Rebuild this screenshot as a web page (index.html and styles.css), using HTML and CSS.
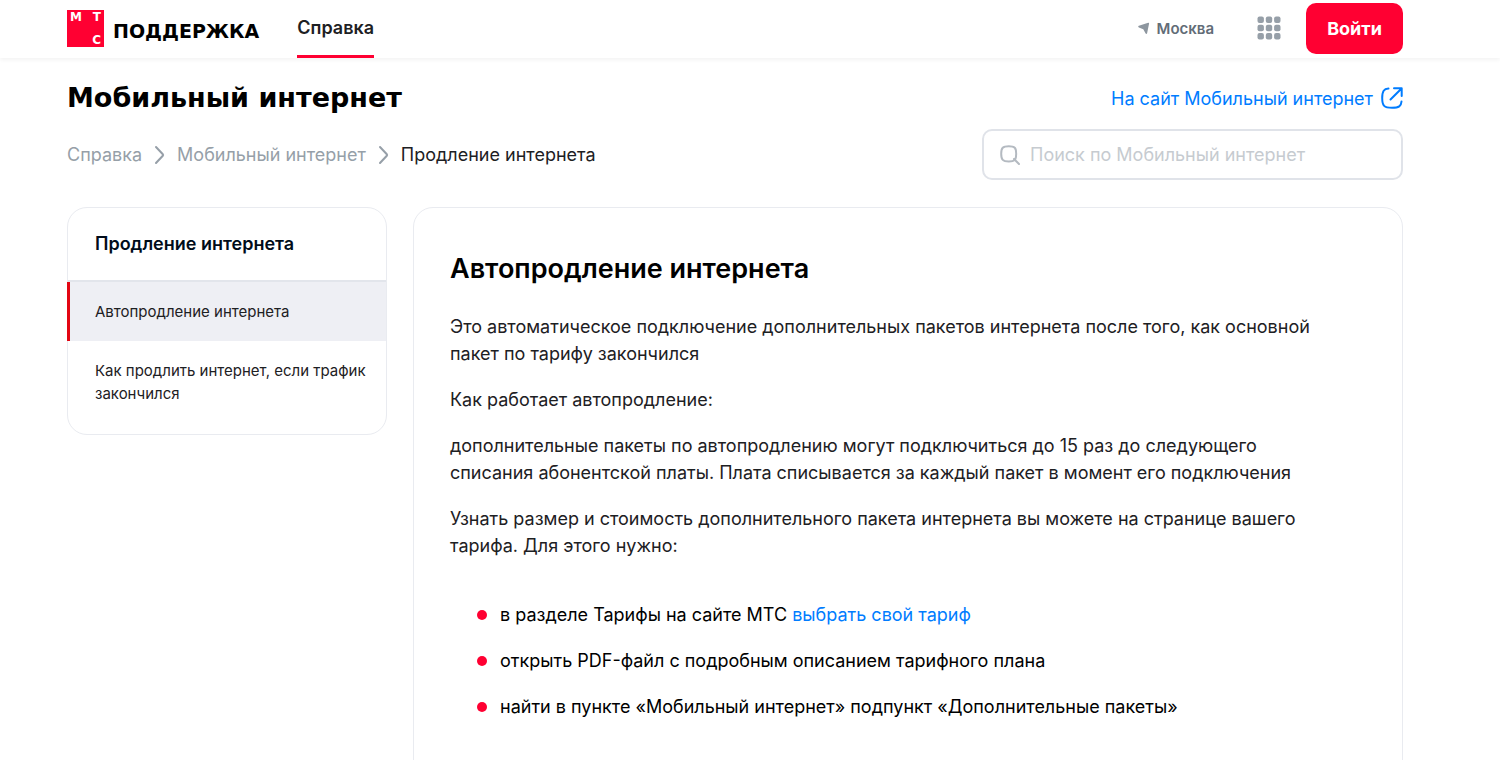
FILE: index.html
```html
<!DOCTYPE html>
<html lang="ru">
<head>
<meta charset="utf-8">
<title>Автопродление интернета — МТС Поддержка</title>
<link rel="stylesheet" href="styles.css">
</head>
<body>
<header class="header">
  <a class="brand" href="#">
    <span class="logo"><span>М</span><span>Т</span><span class="logo-last">С</span></span>
    <span class="brand-name">ПОДДЕРЖКА</span>
  </a>
  <nav class="tabs"><a class="tab" href="#">Справка</a></nav>
  <button class="region" type="button">
    <svg width="12" height="12" viewBox="0 0 12 12" aria-hidden="true"><path d="M10.200.7.900 3.700c-.9.300-.9 1.400 0 1.700l4.400 1.900 2.300 4.200c.4.700 1.300.6 1.500-.3L11.100 1.600c.1-.6-.3-1.100-.9-.9z" fill="#8d969f"/></svg>
    Москва
  </button>
  <button class="apps" type="button" aria-label="Сервисы">
    <svg width="24" height="24" viewBox="0 0 24 24" fill="#969fa8" aria-hidden="true">
      <rect x="0.500" y="0.500" width="6.400" height="6.400" rx="2"/><rect x="8.800" y="0.500" width="6.400" height="6.400" rx="2"/><rect x="17.100" y="0.500" width="6.400" height="6.400" rx="2"/>
      <rect x="0.500" y="8.800" width="6.400" height="6.400" rx="2"/><rect x="8.800" y="8.800" width="6.400" height="6.400" rx="2"/><rect x="17.100" y="8.800" width="6.400" height="6.400" rx="2"/>
      <rect x="0.500" y="17.100" width="6.400" height="6.400" rx="2"/><rect x="8.800" y="17.100" width="6.400" height="6.400" rx="2"/><rect x="17.100" y="17.100" width="6.400" height="6.400" rx="2"/>
    </svg>
  </button>
  <button class="login" type="button">Войти</button>
</header>

<main class="page">
  <div class="title-row">
    <h1 class="page-title">Мобильный интернет</h1>
    <a class="site-link" href="#">На сайт Мобильный интернет
      <svg width="22" height="22" viewBox="0 0 22 22" fill="none" stroke="#007cff" stroke-width="2" stroke-linecap="round" stroke-linejoin="round" aria-hidden="true"><path d="M7.500 1.500C3 1.800 1.200 4 1.200 11c0 8 2 9.800 9.800 9.800 7 0 9.200-1.800 9.500-6.300M13 1.300h7.700V9M20.300 1.700 9.500 12.500"/></svg>
    </a>
  </div>

  <div class="nav-row">
    <nav class="crumbs" aria-label="Навигация">
      <a href="#">Справка</a>
      <svg width="11" height="20" viewBox="0 0 11 20" aria-hidden="true"><path d="m2 2 6.800 7.200q.7.800 0 1.600L2 18"/></svg>
      <a href="#">Мобильный интернет</a>
      <svg width="11" height="20" viewBox="0 0 11 20" aria-hidden="true"><path d="m2 2 6.800 7.200q.7.800 0 1.600L2 18"/></svg>
      <span class="crumb-current">Продление интернета</span>
    </nav>
    <label class="search">
      <svg width="20" height="20" viewBox="0 0 20 20" fill="none" stroke="#b4bac1" stroke-width="2" stroke-linecap="round" aria-hidden="true"><path d="M8.800 1.200c6 0 7.400 1.600 7.400 7.600s-1.400 7.600-7.400 7.600S1.200 14.800 1.200 8.800 2.800 1.200 8.800 1.200zM14 14l5 5"/></svg>
      <input type="search" placeholder="Поиск по Мобильный интернет" aria-label="Поиск">
    </label>
  </div>

  <div class="columns">
    <aside class="side">
      <h2 class="side-title">Продление интернета</h2>
      <a class="side-link side-link-active" href="#">Автопродление интернета</a>
      <a class="side-link" href="#">Как продлить интернет, если трафик закончился</a>
    </aside>
    <article class="article">
      <h2 class="article-title">Автопродление интернета</h2>
      <p>Это автоматическое подключение дополнительных пакетов интернета после того, как основной пакет по тарифу закончился</p>
      <p>Как работает автопродление:</p>
      <p>дополнительные пакеты по автопродлению могут подключиться до 15 раз до следующего списания абонентской платы. Плата списывается за каждый пакет в момент его подключения</p>
      <p>Узнать размер и стоимость дополнительного пакета интернета вы можете на странице вашего тарифа. Для этого нужно:</p>
      <ul class="steps">
        <li>в разделе Тарифы на сайте МТС <a href="#">выбрать свой тариф</a></li>
        <li>открыть PDF-файл с подробным описанием тарифного плана</li>
        <li>найти в пункте «Мобильный интернет» подпункт «Дополнительные пакеты»</li>
      </ul>
    </article>
  </div>
</main>
</body>
</html>
```
FILE: styles.css
```css
* { box-sizing: border-box; }
html { overflow: hidden; }
body {
  margin: 0;
  background: #fff;
  color: #1d2023;
  font-family: Inter, "Noto Sans", sans-serif;
  font-size: 18px;
  line-height: 27px;
}
a { color: #007cff; text-decoration: none; }
button { padding: 0; border: 0; background: none; font: inherit; cursor: pointer; }
svg { flex: none; display: block; }
h1, h2, p, ul { margin: 0; }

.header {
  display: flex;
  align-items: center;
  height: 58px;
  padding: 0 97px 2px 67px;
  box-shadow: 0 2px 4px rgba(0, 0, 0, 0.05);
}
.brand { display: flex; align-items: center; gap: 9px; color: #000; }
.logo {
  display: grid;
  grid-template-columns: 1fr 1fr;
  align-content: space-between;
  justify-items: start;
  width: 37px;
  height: 37px;
  padding: 1px 3px 1px;
  background: #ff0032;
  color: #fff;
  font: 700 12px/12px "DejaVu Sans", sans-serif;
}
.logo span:nth-child(n+2) { justify-self: end; }
.logo-last { grid-column: 2; }
.brand-name { padding-top: 6px; font: 700 19px/27px "DejaVu Sans", sans-serif; }
.tabs { align-self: stretch; margin: 0 auto 0 38px; }
.tab {
  display: block;
  height: 58px;
  padding-top: 14px;
  border-bottom: 3px solid #ff0032;
  color: #1d2023;
  font-weight: 600;
}
.region {
  display: flex;
  align-items: center;
  gap: 7px;
  color: #626c77;
  font-size: 15px;
  font-weight: 600;
}
.apps { margin: 0 25px 0 43px; }
.login {
  width: 97px;
  height: 51px;
  border-radius: 10px;
  background: #ff0032;
  color: #fff;
  font-weight: 700;
}

.page { padding: 21px 97px 0 67px; }
.title-row, .nav-row { display: flex; align-items: center; justify-content: space-between; }
.page-title { color: #000; font: 700 27px/38px "DejaVu Sans", sans-serif; }
.site-link { display: flex; align-items: center; gap: 8px; }
.nav-row { margin-top: 12px; }
.crumbs { display: flex; align-items: center; gap: 12px; }
.crumbs a { color: #969fa8; }
.crumbs path { fill: none; stroke: #969fa8; stroke-width: 2; stroke-linecap: round; }
.search {
  display: flex;
  align-items: center;
  gap: 10px;
  width: 421px;
  height: 51px;
  padding: 0 16px;
  border: 2px solid #e0e3e9;
  border-radius: 10px;
}
.search input {
  flex: 1;
  min-width: 0;
  padding: 0;
  border: 0;
  outline: 0;
  background: none;
  color: #1d2023;
  font: inherit;
}
.search input::placeholder { color: #c6cbd0; opacity: 1; }

.columns {
  display: grid;
  grid-template-columns: 320px 1fr;
  align-items: start;
  gap: 26px;
  margin-top: 27px;
}
.side, .article { border: 1px solid #e9ebf0; border-radius: 20px; }
.side { padding-bottom: 11px; }
.side-title {
  padding: 22px 27px 23px;
  border-bottom: 2px solid #e2e5eb;
  color: #000c1a;
  font-size: 18px;
  line-height: 27px;
  font-weight: 600;
}
.side-link {
  display: block;
  padding: 18px 16px 18px 27px;
  color: #1d2023;
  font-size: 15px;
  line-height: 23px;
}
.side-link-active {
  margin-left: -1px;
  padding-left: 25px;
  border-left: 3px solid #e30613;
  background: #eeeff4;
}
.article { padding: 42px 64px 80px 36px; }
.article-title {
  margin-bottom: 25px;
  color: #000;
  font-size: 27px;
  line-height: 38px;
  font-weight: 600;
}
.article p { margin-bottom: 19px; }
.steps {
  display: grid;
  gap: 19px;
  margin-top: 42px;
  padding: 0 0 0 27px;
  color: #000;
  list-style: none;
}
.steps li { display: flex; align-items: center; white-space: pre-wrap; }
.steps li::before {
  content: "";
  width: 10px;
  height: 10px;
  margin-right: 13px;
  border-radius: 50%;
  background: #ff0032;
}
```
